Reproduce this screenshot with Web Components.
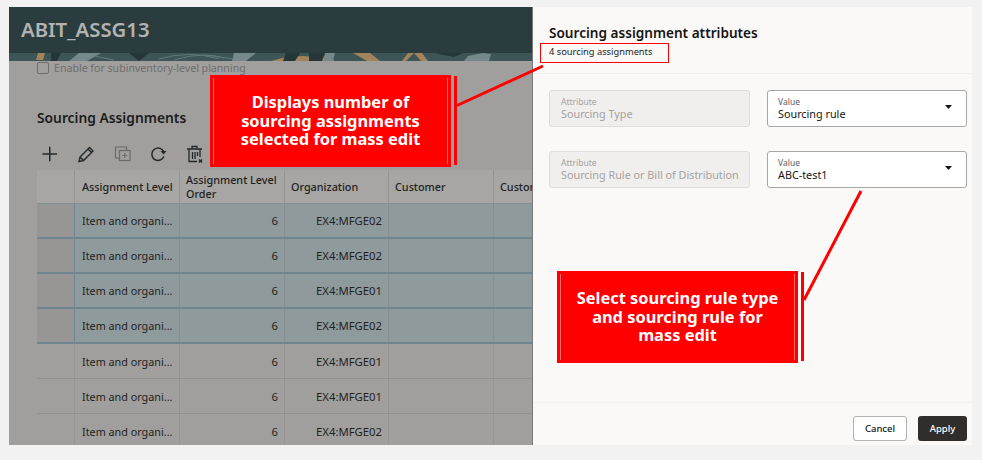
<!DOCTYPE html>
<html>
<head>
<meta charset="utf-8">
<title>Sourcing assignments</title>
<style>
  html,body{margin:0;padding:0;background:#f2f2f2;}
  body{width:982px;height:460px;overflow:hidden;font-family:"Noto Sans","Open Sans",sans-serif;}
</style>
</head>
<body>
<mass-edit-page>
  <item-page slot="left"></item-page>
  <edit-drawer slot="right"></edit-drawer>
</mass-edit-page>

<script>
customElements.define('mass-edit-page', class extends HTMLElement {
  constructor() {
    super()
    const shadow = this.attachShadow({ mode: 'open' })
    shadow.innerHTML = `
    <style>
      :host{display:block;position:relative;width:982px;height:460px;box-sizing:border-box;padding:7px 10px 15px 9px;}
      .frame{display:flex;height:438px;}
      .overlay{position:absolute;left:0;top:0;pointer-events:none;}
      .c1{position:absolute;left:210px;top:75px;}
      .c2{position:absolute;left:557px;top:271px;}
      .mark{position:absolute;left:540px;top:43px;width:129px;height:20px;box-sizing:border-box;border:1px solid #f00;}
    </style>
    <div class="frame"><slot name="left"></slot><slot name="right"></slot></div>
    <svg class="overlay" width="982" height="460">
      <path d="M457 105.500 L543 66" stroke="#f00" stroke-width="3" fill="none"/>
      <path d="M804 300 L861 191" stroke="#f00" stroke-width="3" fill="none"/>
    </svg>
    <div class="mark"></div>
    <call-out class="c1" style="--w:241px">Displays number of<br>sourcing assignments<br>selected for mass edit</call-out>
    <call-out class="c2" style="--w:241px">Select sourcing rule type<br>and sourcing rule for<br>mass edit</call-out>`
  }
})

customElements.define('call-out', class extends HTMLElement {
  constructor() {
    super()
    const shadow = this.attachShadow({ mode: 'open' })
    shadow.innerHTML = `
    <style>
      :host{display:flex;gap:3px;}
      .box{position:relative;width:var(--w);height:92px;background:#f00;color:#fff;display:flex;align-items:center;justify-content:center;text-align:center;font:700 16.400px/18.500px "Noto Sans",sans-serif;}
      .box::before,.box::after{content:'';position:absolute;top:3px;bottom:3px;width:1px;background:#ff6a6a;}
      .box::before{left:3px;}
      .box::after{right:3px;}
      .bar{width:3px;height:89px;margin-top:1px;background:#f00;}
    </style>
    <div class="box"><span><slot></slot></span></div>
    <div class="bar"></div>`
  }
})

customElements.define('item-page', class extends HTMLElement {
  constructor() {
    super()
    const shadow = this.attachShadow({ mode: 'open' })
    shadow.innerHTML = `
    <style>
      :host{display:block;width:524px;height:438px;overflow:hidden;background:#a09f9d;color:#222;box-sizing:border-box;position:relative;}
      .head{height:46px;background:#2b3c3f;display:flex;align-items:center;padding-left:12px;box-sizing:border-box;color:#b3b3b1;font:600 20.300px "Noto Sans",sans-serif;padding-bottom:3px;}
      .banner{display:block;height:8px;}
      .check{display:flex;align-items:center;gap:5px;height:14px;margin:0 0 0 28px;font-size:10.600px;color:#6f6e6c;}
      .check i{display:block;width:10px;height:10px;border:1px solid #6f6e6c;border-radius:2px;}
      h2{margin:33px 0 0 28px;font:600 13.800px/20px "Noto Sans",sans-serif;color:#1c1c1b;}
      .tools{display:flex;margin:15px 0 0 30px;height:22px;align-items:center;gap:15px;}
      .tools svg{display:block;width:22px;height:22px;fill:none;stroke:#23282b;}
      assign-table{margin:5px 0 0 28px;}
      .edge{position:absolute;top:0;bottom:0;right:0;width:1px;background:#777;}
    </style>
    <div class="head">ABIT_ASSG13</div>
    <svg class="banner" width="524" height="8" viewBox="0 0 524 8" preserveAspectRatio="none">
      <rect width="524" height="8" fill="#3d5557"/>
      <path d="M29 0h7l-2 7h-7zM262 8l15-4 17-1 12 1 13-1 7 5zM344 0h17l10 8h-13zM399 0h6l-8 8h-4zM405 0h8l6 8h-7z" fill="#a3845a"/>
      <path d="M70 0h22l-14 8h-18zM225 0h22l-10 8h-14zM316 0h10l-2 8h-9zM455 8l4-5 15-3 8 1-2 7z" fill="#75898b"/>
      <path d="M42 0h10l-4 8h-6zM120 0h20l-10 8zM277 0h14l-5 8h-12zM300 0h16l-3 8h-13zM426 0h28l-9 4z" fill="#253638"/>
      <path d="M150 6q30-9 60 0M165 7q30-9 50-2M85 3l20 4M195 2l30 4" stroke="#61787a" fill="none"/>
    </svg>
    <div class="check"><i></i><span>Enable for subinventory-level planning</span></div>
    <h2>Sourcing Assignments</h2>
    <div class="tools">
      <svg viewBox="0 0 22 22" stroke-width="1.500"><path d="M3.500 11h14.500M10.750 3.750v14.500"/></svg>
      <svg viewBox="0 0 22 22" stroke-width="1.400" style="margin-left:-1px"><path d="M4 18.500l1-4.500 9.500-9.500 3.500 3.500-9.500 9.500zM13 6l3.500 3.500M5 14l3.500 3.500"/></svg>
      <svg viewBox="0 0 22 22" stroke-width="1.200" style="stroke:#6b6b6a"><path d="M7 15H3.500V4H14.500v3"/><rect x="7.500" y="7.500" width="10.500" height="10"/><path d="M12.750 10v5M10.250 12.500h5"/></svg>
      <svg viewBox="0 0 22 22" stroke-width="1.500" style="margin-left:-2px"><path d="M16.800 13.500A6.200 6.200 0 1 1 15 6.500L16.500 8"/><path d="M13.500 8h6l-3 3.500z" fill="#23282b" stroke="none"/></svg>
      <svg viewBox="0 0 22 22" stroke-width="1.300"><path d="M3 6h15M8 6V3.500h5V6M5 6v12.500h8M16 6v8M8.500 9v7M11 9v7M13.500 9v4"/><path d="M15 16.500l3 3M18 16.500l-3 3" stroke-width="1.500"/></svg>
    </div>
    <assign-table></assign-table>
    <div class="edge"></div>`
  }
})

customElements.define('assign-table', class extends HTMLElement {
  constructor() {
    super()
    const shadow = this.attachShadow({ mode: 'open' })
    const rows = [
      ['EX4:MFGE02', 1], ['EX4:MFGE02', 1], ['EX4:MFGE01', 1], ['EX4:MFGE02', 1],
      ['EX4:MFGE01', 0], ['EX4:MFGE01', 0], ['EX4:MFGE02', 0]
    ]
    const body = rows.map(r => `
      <div class="row ${r[1] ? 'sel' : ''}">
        <div class="c gut"></div>
        <div class="c first"><span class="cut">Item and organi...</span></div>
        <div class="c num">6</div>
        <div class="c num">${r[0]}</div>
        <div class="c"></div>
        <div class="c"></div>
      </div>`).join('')
    shadow.innerHTML = `
    <style>
      :host{display:block;width:496px;font:10.800px "Noto Sans",sans-serif;color:#1f1f1e;}
      .row{display:grid;grid-template-columns:38px 105px 105px 104px 105px 39px;height:35px;box-sizing:border-box;border-bottom:1px solid #929190;}
      .c{display:flex;align-items:center;padding:0 6px;border-right:1px solid #969594;box-sizing:border-box;min-width:0;}
      .first{padding-left:7px;}
      .head{height:34px;background:#a7a6a4;border-bottom:1px solid #7f9094;font-weight:500;line-height:14px;}
      .head .c{padding-right:0;}
      .head .gut{background:#a7a6a4;}
      .gut{background:#a09f9d;padding:0;}
      .num{justify-content:flex-end;font-size:11.300px;}
      .cut{white-space:nowrap;}
      .sel{background:#8f9a9d;border-bottom:2px solid #6f8590;}
      .sel .c{border-right-color:#869093;}
      .sel .gut{background:#979695;border-right-color:#6f8590;}
    </style>
    <div class="row head">
      <div class="c gut"></div>
      <div class="c first" style="white-space:nowrap">Assignment Level</div>
      <div class="c">Assignment Level Order</div>
      <div class="c">Organization</div>
      <div class="c">Customer</div>
      <div class="c" style="white-space:nowrap;overflow:hidden;border-right:0">Custom</div>
    </div>${body}`
  }
})

customElements.define('edit-drawer', class extends HTMLElement {
  constructor() {
    super()
    const shadow = this.attachShadow({ mode: 'open' })
    shadow.innerHTML = `
    <style>
      :host{display:flex;flex-direction:column;width:439px;height:438px;background:#fbf9f8;color:#161513;box-sizing:border-box;}
      .top{height:67px;padding:16px 16px 0;box-sizing:border-box;border-bottom:1px solid #f1efee;}
      h1{margin:0;font:600 13.600px/20px "Noto Sans",sans-serif;}
      .sub{font-size:9.300px;line-height:16px;margin-top:1px;color:#222;}
      .form{flex:1;display:grid;grid-template-columns:201px 200px;column-gap:17px;row-gap:24px;padding:16px 5px 0 16px;align-content:start;}
      .foot{height:43px;box-sizing:border-box;border-top:1px solid #f4f2f1;display:flex;justify-content:flex-end;align-items:flex-start;gap:11px;padding:13px 5px 0 0;}
      .btn{height:25px;border-radius:3px;box-sizing:border-box;display:flex;align-items:center;justify-content:center;font:500 9.500px "Noto Sans",sans-serif;}
      .cancel{width:54px;background:#fff;border:1px solid #b4b2b0;}
      .apply{width:49px;background:#312d2a;color:#fff;}
    </style>
    <div class="top">
      <h1>Sourcing assignment attributes</h1>
      <div class="sub">4 sourcing assignments</div>
    </div>
    <div class="form">
      <field-box label="Attribute" disabled>Sourcing Type</field-box>
      <field-box label="Value">Sourcing rule</field-box>
      <field-box label="Attribute" disabled>Sourcing Rule or Bill of Distribution</field-box>
      <field-box label="Value">ABC-test1</field-box>
    </div>
    <div class="foot">
      <div class="btn cancel">Cancel</div>
      <div class="btn apply">Apply</div>
    </div>`
  }
})

customElements.define('field-box', class extends HTMLElement {
  constructor() {
    super()
    const shadow = this.attachShadow({ mode: 'open' })
    shadow.innerHTML = `
    <style>
      :host{display:block;height:37px;box-sizing:border-box;position:relative;background:#fff;border:1px solid #a9a7a5;border-radius:3px;padding:5px 10px 0;color:#161513;}
      :host([disabled]){background:#f1efed;border-color:#dfdddb;color:#a4a2a0;padding-left:11px;}
      .l{font-size:8.500px;line-height:11px;color:#5f5d5b;}
      :host([disabled]) .l{color:#a4a2a0;}
      .v{font-size:10.800px;line-height:14px;white-space:nowrap;}
      svg{position:absolute;right:14px;top:14px;}
      :host([disabled]) svg{display:none;}
    </style>
    <div class="l"></div>
    <div class="v"><slot></slot></div>
    <svg width="7" height="4" viewBox="0 0 8 5" preserveAspectRatio="none"><path d="M0 0h8L4 5z" fill="#161513"/></svg>`
  }
  connectedCallback() {
    this.shadowRoot.querySelector('.l').innerText = this.getAttribute('label')
  }
})
</script>
</body>
</html>
